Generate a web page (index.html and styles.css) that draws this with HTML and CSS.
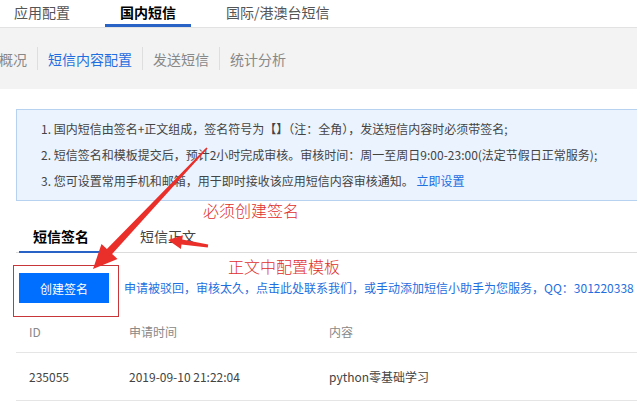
FILE: index.html
```html
<!DOCTYPE html>
<html lang="zh-CN">

<head>
    <meta charset="UTF-8">
    <meta name="viewport" content="width=device-width, initial-scale=1.0">
    <title>国内短信 - 短信内容配置</title>
    <link rel="stylesheet" href="styles.css">
</head>

<body>
    <div class="page">
        <div class="top-nav">
            <a class="top-tab">应用配置</a>
            <a class="top-tab active">国内短信</a>
            <a class="top-tab">国际/港澳台短信</a>
        </div>

        <div class="sub-nav">
            <a class="sub-item">概况</a>
            <span class="sub-sep"></span>
            <a class="sub-item active">短信内容配置</a>
            <span class="sub-sep"></span>
            <a class="sub-item">发送短信</a>
            <span class="sub-sep"></span>
            <a class="sub-item">统计分析</a>
        </div>

        <div class="content">
            <div class="notice">
                <p>1. 国内短信由签名+正文组成，签名符号为【】（注：全角），发送短信内容时必须带签名;</p>
                <p>2. 短信签名和模板提交后，预计2小时完成审核。审核时间：周一至周日9:00-23:00(法定节假日正常服务);</p>
                <p>3. 您可设置常用手机和邮箱，用于即时接收该应用短信内容审核通知。 <a class="link">立即设置</a></p>
            </div>

            <div class="tabs">
                <a class="tab active">短信签名</a>
                <a class="tab">短信正文</a>
            </div>

            <div class="toolbar">
                <button class="btn-primary">创建签名</button>
                <a class="link help">申请被驳回，审核太久，点击此处联系我们，或手动添加短信小助手为您服务，QQ：301220338</a>
            </div>

            <table class="list">
                <thead>
                    <tr>
                        <th class="col-id">ID</th>
                        <th class="col-time">申请时间</th>
                        <th>内容</th>
                    </tr>
                </thead>
                <tbody>
                    <tr>
                        <td>235055</td>
                        <td>2019-09-10 21:22:04</td>
                        <td>python零基础学习</td>
                    </tr>
                </tbody>
            </table>
        </div>

        <!-- annotations drawn over the screenshot -->
        <div class="mark-box"></div>
        <span class="note note-sign">必须创建签名</span>
        <span class="note note-tpl">正文中配置模板</span>
        <svg class="arrows" width="637" height="408" viewBox="0 0 637 408">
            <polygon points="207.6,148.4 112.1,253.9 117.5,259.1 93,269 101.5,243.9 106.9,249.1 206.4,147.6" />
            <polygon points="168,240 182.9,235.2 182.3,239.6 208.2,244.6 207.8,247.4 181.5,244.6 180.9,249" />
        </svg>
    </div>
</body>

</html>
```

FILE: styles.css
```css
html,
body {
    margin: 0;
    padding: 0;
    overflow: hidden;
    background-color: #fff;
}

body {
    font-family: "Noto Sans CJK SC", "Liberation Sans", sans-serif;
    font-size: 12px;
    color: #444;
}

a {
    cursor: pointer;
}

.page {
    position: relative;
    width: 637px;
    height: 408px;
    overflow: hidden;
}

/* top level tabs */
.top-nav {
    display: flex;
    gap: 20px;
    height: 27px;
    margin-left: -1px;
    border-bottom: 1px solid #e2e2e2;
}

.top-tab {
    padding: 0 15px;
    font-size: 14px;
    line-height: 24px;
    color: #555;
    border-bottom: 3px solid transparent;
}

.top-tab.active {
    color: #000;
    font-weight: bold;
    border-bottom-color: #2a63c6;
}

/* second level nav */
.sub-nav {
    display: flex;
    align-items: center;
    height: 61px;
    margin-left: -11px;
    background-color: #f3f3f3;
}

.sub-item {
    padding: 0 10px;
    font-size: 14px;
    line-height: 20px;
    color: #888;
}

.sub-item.active {
    color: #1f6fe0;
}

.sub-sep {
    width: 1px;
    height: 23px;
    background-color: #dedede;
}

.content {
    width: 984px;
    padding: 20px 0 0 16px;
}

.notice {
    padding: 6px 24px;
    background-color: #eaf3fe;
    border: 1px solid #b6d2f0;
}

.notice p {
    margin: 0;
    line-height: 26px;
    color: #444;
}

.link {
    color: #1f6fe0;
}

/* content tabs */
.tabs {
    display: flex;
    gap: 22px;
    margin-top: 20px;
    padding-left: 3px;
    border-bottom: 1px solid #dcdcdc;
}

.tab {
    padding: 0 15px 0 14px;
    font-size: 14px;
    line-height: 30px;
    color: #444;
    border-bottom: 2px solid transparent;
    margin-bottom: -1px;
}

.tab.active {
    color: #000;
    font-weight: bold;
    border-bottom-color: #2a63c6;
}

.toolbar {
    display: flex;
    align-items: center;
    gap: 15px;
    margin-top: 20px;
    padding-left: 3px;
    white-space: nowrap;
}

.btn-primary {
    width: 90px;
    height: 30px;
    padding: 0;
    border: none;
    background-color: #006eff;
    color: #fff;
    font-family: inherit;
    font-size: 12px;
}

.help {
    line-height: 30px;
}

/* list */
.list {
    width: 100%;
    margin-top: 8px;
    border-collapse: collapse;
}

.list th,
.list td {
    padding: 0 13px;
    text-align: left;
    font-weight: normal;
    border-bottom: 1px solid #e5e5e5;
}

.list th {
    height: 41px;
    color: #888;
}

.list td {
    height: 47px;
    color: #444;
}

.col-id {
    width: 74px;
}

.col-time {
    width: 174px;
}

/* annotations */
.mark-box {
    position: absolute;
    left: 13px;
    top: 265px;
    width: 104px;
    height: 50px;
    border: 1px solid #c8363a;
}

.note {
    position: absolute;
    color: #e0302c;
    font-weight: 300;
    line-height: 20px;
    white-space: nowrap;
}

.note-sign {
    left: 203px;
    top: 200px;
    font-size: 16px;
}

.note-tpl {
    left: 228px;
    top: 256px;
    font-size: 16px;
}

.arrows {
    position: absolute;
    left: 0;
    top: 0;
    fill: #ea2f2a;
}
```
